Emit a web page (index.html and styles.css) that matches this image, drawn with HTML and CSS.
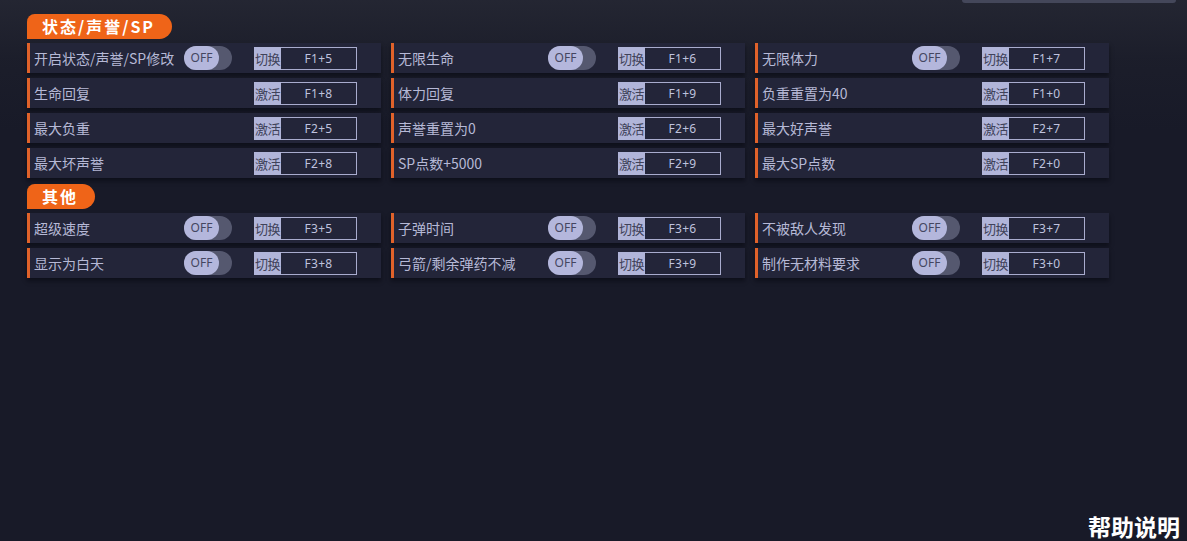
FILE: index.html
```html
<!DOCTYPE html>
<html lang="zh-CN">
<head>
<meta charset="utf-8">
<title>修改器</title>
<link rel="stylesheet" href="styles.css">
</head>
<body>
<div class="page">
  <div class="topbar"></div>

  <section class="section">
    <h2 class="pill">状态/声誉/SP</h2>
    <div class="grid">
      <div class="row"><span class="label">开启状态/声誉/SP修改</span><span class="toggle"><span class="knob">OFF</span></span><span class="key"><span class="kind">切换</span><span class="combo">F1+5</span></span></div>
      <div class="row"><span class="label">无限生命</span><span class="toggle"><span class="knob">OFF</span></span><span class="key"><span class="kind">切换</span><span class="combo">F1+6</span></span></div>
      <div class="row"><span class="label">无限体力</span><span class="toggle"><span class="knob">OFF</span></span><span class="key"><span class="kind">切换</span><span class="combo">F1+7</span></span></div>

      <div class="row"><span class="label">生命回复</span><span class="blank"></span><span class="key"><span class="kind">激活</span><span class="combo">F1+8</span></span></div>
      <div class="row"><span class="label">体力回复</span><span class="blank"></span><span class="key"><span class="kind">激活</span><span class="combo">F1+9</span></span></div>
      <div class="row"><span class="label">负重重置为40</span><span class="blank"></span><span class="key"><span class="kind">激活</span><span class="combo">F1+0</span></span></div>

      <div class="row"><span class="label">最大负重</span><span class="blank"></span><span class="key"><span class="kind">激活</span><span class="combo">F2+5</span></span></div>
      <div class="row"><span class="label">声誉重置为0</span><span class="blank"></span><span class="key"><span class="kind">激活</span><span class="combo">F2+6</span></span></div>
      <div class="row"><span class="label">最大好声誉</span><span class="blank"></span><span class="key"><span class="kind">激活</span><span class="combo">F2+7</span></span></div>

      <div class="row"><span class="label">最大坏声誉</span><span class="blank"></span><span class="key"><span class="kind">激活</span><span class="combo">F2+8</span></span></div>
      <div class="row"><span class="label">SP点数+5000</span><span class="blank"></span><span class="key"><span class="kind">激活</span><span class="combo">F2+9</span></span></div>
      <div class="row"><span class="label">最大SP点数</span><span class="blank"></span><span class="key"><span class="kind">激活</span><span class="combo">F2+0</span></span></div>
    </div>
  </section>

  <section class="section second">
    <h2 class="pill">其他</h2>
    <div class="grid">
      <div class="row"><span class="label">超级速度</span><span class="toggle"><span class="knob">OFF</span></span><span class="key"><span class="kind">切换</span><span class="combo">F3+5</span></span></div>
      <div class="row"><span class="label">子弹时间</span><span class="toggle"><span class="knob">OFF</span></span><span class="key"><span class="kind">切换</span><span class="combo">F3+6</span></span></div>
      <div class="row"><span class="label">不被敌人发现</span><span class="toggle"><span class="knob">OFF</span></span><span class="key"><span class="kind">切换</span><span class="combo">F3+7</span></span></div>

      <div class="row"><span class="label">显示为白天</span><span class="toggle"><span class="knob">OFF</span></span><span class="key"><span class="kind">切换</span><span class="combo">F3+8</span></span></div>
      <div class="row"><span class="label">弓箭/剩余弹药不减</span><span class="toggle"><span class="knob">OFF</span></span><span class="key"><span class="kind">切换</span><span class="combo">F3+9</span></span></div>
      <div class="row"><span class="label">制作无材料要求</span><span class="toggle"><span class="knob">OFF</span></span><span class="key"><span class="kind">切换</span><span class="combo">F3+0</span></span></div>
    </div>
  </section>

  <footer class="help">帮助说明</footer>
</div>
</body>
</html>
```

FILE: styles.css
```css
* { box-sizing: border-box; }

html, body {
  margin: 0;
  padding: 0;
  height: 100%;
}

body {
  background: #181a28;
  font-family: "Noto Sans CJK SC", "Noto Sans", "Liberation Sans", sans-serif;
  overflow: hidden;
}

.page {
  position: relative;
  min-height: 100vh;
  display: flex;
  flex-direction: column;
  padding: 14px 0 0 27px;
  background:
    linear-gradient(180deg, rgba(38, 40, 52, 0.85) 0px, rgba(30, 32, 44, 0.6) 60px, rgba(24, 26, 40, 0) 130px),
    #181a28;
}

.topbar {
  position: absolute;
  top: 0;
  left: 962px;
  width: 214px;
  height: 3px;
  background: #44475a;
  border-radius: 0 0 5px 5px;
}

.section.second { margin-top: 6px; }

.pill {
  display: inline-block;
  align-self: flex-start;
  margin: 0 0 4px 0;
  height: 25px;
  line-height: 25px;
  padding: 0 17px 0 15px;
  background: #ef6418;
  color: #ffffff;
  font-size: 16px;
  font-weight: 700;
  letter-spacing: 2px;
  border-radius: 8px 13px 13px 0;
}

.grid {
  display: grid;
  grid-template-columns: repeat(3, 354px);
  column-gap: 10px;
  row-gap: 5px;
}

.row {
  height: 30px;
  display: grid;
  grid-template-columns: minmax(0, 1fr) 48px 103px;
  column-gap: 22px;
  align-items: center;
  padding: 0 24px 0 4px;
  background: #232539;
  border-left: 3px solid #e0622a;
  box-shadow: 0 3px 4px rgba(6, 7, 14, 0.55);
}

.label {
  font-size: 14px;
  color: #b6b9d6;
  white-space: nowrap;
  line-height: 30px;
}

.toggle {
  display: flex;
  width: 48px;
  height: 24px;
  border-radius: 12px;
  background: #55586f;
}

.knob {
  width: 35px;
  height: 24px;
  border-radius: 12px;
  background: #b4b7dc;
  color: #444660;
  font-family: "Noto Sans", "Liberation Sans", sans-serif;
  font-size: 12px;
  line-height: 24px;
  text-align: center;
}

.key {
  display: flex;
  width: 103px;
  height: 23px;
}

.kind {
  width: 27px;
  height: 23px;
  background: #b1b5d9;
  color: #404259;
  font-size: 13px;
  line-height: 23px;
  text-align: center;
  letter-spacing: -0.5px;
}

.combo {
  flex: 1;
  height: 23px;
  border: 1px solid #a9acce;
  border-left: none;
  color: #bfc2de;
  font-family: "Noto Sans", "Liberation Sans", sans-serif;
  font-size: 12px;
  line-height: 21px;
  text-align: center;
  letter-spacing: 0.3px;
}

.help {
  margin-top: auto;
  align-self: flex-end;
  margin-right: 7px;
  margin-bottom: 1px;
  color: #ffffff;
  font-size: 23px;
  font-weight: 700;
  line-height: 28px;
  letter-spacing: 0;
}
```
